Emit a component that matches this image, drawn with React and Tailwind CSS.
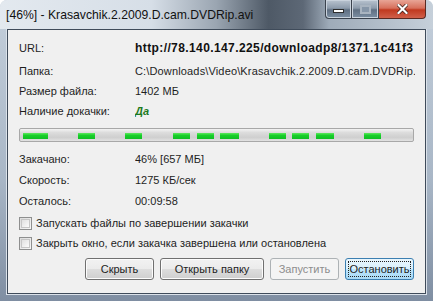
import React from 'react';

const font = { fontFamily: '"Liberation Sans", Arial, sans-serif' };

const Row = ({ label, children, className = '' }) => (
  <div className={`flex h-[20px] items-center ${className}`}>
    <div className="w-[116px] shrink-0">{label}</div>
    <div className="min-w-0 flex-1 overflow-hidden whitespace-nowrap pr-[2px]">{children}</div>
  </div>
);

const Checkbox = ({ label, className = '' }) => (
  <div className={`flex h-[20px] items-center gap-[4px] ${className}`}>
    <div className="h-[13px] w-[13px] border border-[#8e8f8f] bg-[linear-gradient(135deg,#dcdcdc,#f7f7f7)] p-[1px]">
      <div className="h-full w-full border border-[#c6c6c6] bg-[linear-gradient(135deg,#e0e0e0,#fbfbfb)]" />
    </div>
    <span>{label}</span>
  </div>
);

const Button = ({ children, width, kind }) => {
  if (kind === 'disabled') {
    return (
      <div className={`flex h-[22px] ${width} items-center justify-center rounded-[3px] border border-[#adb2b5] bg-[#f4f4f4] text-[#8d8d8d]`}>
        {children}
      </div>
    );
  }
  if (kind === 'default') {
    return (
      <div className={`flex h-[22px] ${width} items-center justify-center rounded-[3px] border border-[#3c7fb1] bg-[linear-gradient(180deg,#eaf6fd_0%,#d9f0fc_50%,#bee6fd_51%,#a7d9f5_100%)] p-[2px]`}>
        <div className="flex h-full w-full items-center justify-center border border-dotted border-[#222]">{children}</div>
      </div>
    );
  }
  return (
    <div className={`flex h-[22px] ${width} items-center justify-center rounded-[3px] border border-[#707070] bg-[linear-gradient(180deg,#f2f2f2_0%,#ebebeb_50%,#dddddd_51%,#cfcfcf_100%)] shadow-[inset_0_0_0_1px_#fcfcfc]`}>
      {children}
    </div>
  );
};

const segments = [
  [23, 25], [78, 17], [125, 17], [173, 17], [197, 17], [220, 19], [269, 17], [292, 17], [316, 18], [364, 17],
];

export default function App() {
  return (
    <div style={font} className="flex h-[301px] w-[433px] flex-col overflow-hidden rounded-t-[7px] bg-[linear-gradient(180deg,#c4cfdb_0%,#a8b6c6_60%,#7f8ea2_100%)] text-[11px] text-[#1e1e1e]">
      <div className="relative flex h-[29px] shrink-0 bg-[linear-gradient(90deg,#e3e9ef_0%,#d6dee7_35%,#9aa5b1_50%,#4e5966_62%,#5d6876_70%,#9eabb9_76%,#c6d0da_100%)]">
        <div className="pl-[6px] pt-[6px] text-[12.2px] text-[#111]">[46%] - Krasavchik.2.2009.D.cam.DVDRip.avi</div>
        <div className="absolute right-[7px] top-0 flex h-[19px]">
          <div className="flex w-[27px] items-center justify-center rounded-bl-[4px] border border-t-0 border-[#3a424d] bg-[linear-gradient(180deg,#b9c4d0_0%,#8d9bab_45%,#5f6f82_55%,#7c8fa3_100%)] shadow-[inset_0_0_0_1px_#c9d2dc]">
            <div className="mt-[3px] h-[4px] w-[11px] border border-[#2e2e2e] bg-white" />
          </div>
          <div className="flex w-[27px] items-center justify-center border border-l-0 border-t-0 border-[#3a424d] bg-[linear-gradient(180deg,#b9c4d0_0%,#8d9bab_45%,#5f6f82_55%,#7c8fa3_100%)] shadow-[inset_0_0_0_1px_#c9d2dc]">
            <div className="h-[9px] w-[11px] border-[2px] border-[#a9b4c0] bg-[#8696a8]" />
          </div>
          <div className="flex w-[47px] items-center justify-center rounded-br-[4px] border border-l-0 border-t-0 border-[#5a2a22] bg-[linear-gradient(180deg,#e8a596_0%,#d7705c_45%,#c0391f_55%,#d0604a_100%)]">
            <svg width="11" height="10" viewBox="0 0 11 10">
              <path d="M1.5 1 L9.5 9 M9.5 1 L1.5 9" stroke="#3a1a14" strokeWidth="3.6" strokeLinecap="square" />
              <path d="M1.5 1 L9.5 9 M9.5 1 L1.5 9" stroke="#ffffff" strokeWidth="2.2" strokeLinecap="square" />
            </svg>
          </div>
        </div>
      </div>
      <div className="mx-[7px] mb-[7px] flex flex-1 flex-col border border-[#3f4b5a] bg-[#f0f0f0] pl-[11px] pr-[10px] shadow-[0_0_0_1px_#dbe2ea]">
        <Row label="URL:" className="mt-[8px]">
          <span className="text-[12px] font-bold tracking-[0.4px] text-[#111]">http://78.140.147.225/downloadp8/1371.1c41f3</span>
        </Row>
        <Row label="Папка:" className="mt-[3px]">
          <span className="tracking-[0.15px]">C:\Downloads\Video\Krasavchik.2.2009.D.cam.DVDRip.avi</span>
        </Row>
        <Row label="Размер файла:">1402 МБ</Row>
        <Row label="Наличие докачки:">
          <span className="font-bold italic text-[#1d7a1d]">Да</span>
        </Row>
        <div className="relative mt-[7px] h-[14px] w-[395px] rounded-[2px] border border-[#a8a8a8] bg-[linear-gradient(180deg,#f3f3f3_0%,#dcdcdc_30%,#cfcfcf_70%,#e2e2e2_100%)]">
          {segments.map(([x, w]) => (
            <div
              key={x}
              className="absolute top-[4px] h-[6px] bg-[linear-gradient(180deg,#5ee85e_0%,#18cf2a_40%,#0fbf23_100%)]"
              style={{ left: x - 20, width: w }}
            />
          ))}
        </div>
        <Row label="Закачано:" className="mt-[7px]">46% [657 МБ]</Row>
        <Row label="Скорость:" className="mt-[1px]">1275 КБ/сек</Row>
        <Row label="Осталось:" className="mt-[1px]">00:09:58</Row>
        <Checkbox label="Запускать файлы по завершении закачки" className="mt-[2px]" />
        <Checkbox label="Закрыть окно, если закачка завершена или остановлена" />
        <div className="mt-[5px] flex justify-end gap-[6px] pr-[1px]">
          <Button width="w-[69px]">Скрыть</Button>
          <Button width="w-[104px]">Открыть папку</Button>
          <Button width="w-[69px]" kind="disabled">Запустить</Button>
          <Button width="w-[69px]" kind="default">Остановить</Button>
        </div>
      </div>
    </div>
  );
}
